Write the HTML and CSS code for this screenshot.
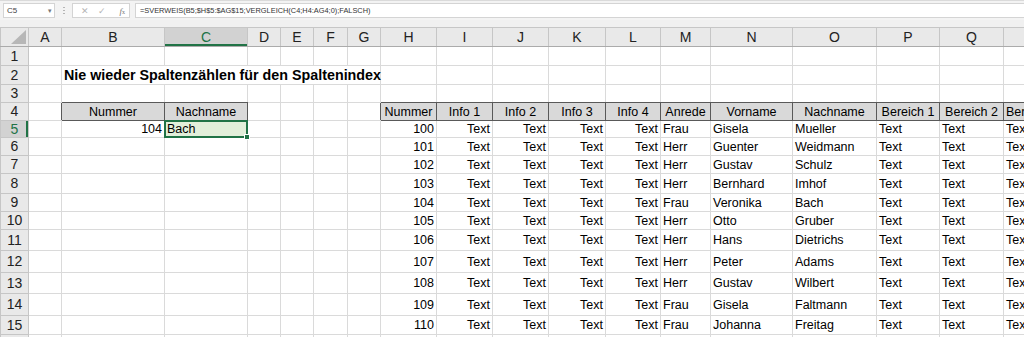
FILE: index.html
```html
<!DOCTYPE html>
<html lang="de">
<head>
    <meta charset="UTF-8">
    <title>Spaltenindex</title>
    <link rel="stylesheet" href="styles.css">
</head>
<body>
    <div class="bar">
        <div class="namebox"><span>C5</span><span class="drop">&#9662;</span></div>
        <div class="grip"></div>
        <div class="fxbox">
            <span class="ico">&#10005;</span>
            <span class="ico">&#10003;</span>
            <span class="fx"><i>f</i><small>x</small></span>
        </div>
        <div class="formula">=SVERWEIS(B5;$H$5:$AG$15;VERGLEICH(C4;H4:AG4;0);FALSCH)</div>
    </div>
    <div class="gap"></div>

    <div class="sheet">
        <table class="grid">
            <colgroup>
                <col class="w-hdr"><col class="w-a"><col class="w-b"><col class="w-c"><col class="w-d"><col class="w-d"><col class="w-f"><col class="w-d">
                <col class="w-h"><col class="w-h"><col class="w-h"><col class="w-k"><col class="w-l"><col class="w-m"><col class="w-n"><col class="w-o"><col class="w-p"><col class="w-q"><col class="w-r">
            </colgroup>
            <thead>
                <tr class="h18">
                    <th class="corner"><svg width="28" height="18" viewBox="0 0 28 18"><polygon points="10,16 25,16 25,2" fill="#b7b7b7"/></svg></th>
                    <th>A</th><th>B</th><th class="cur-col">C</th><th>D</th><th>E</th><th>F</th><th>G</th>
                    <th>H</th><th>I</th><th>J</th><th>K</th><th>L</th><th>M</th><th>N</th><th>O</th><th>P</th><th>Q</th><th>R</th>
                </tr>
            </thead>
            <tbody>
                <tr class="h19"><th>1</th><td></td><td></td><td></td><td></td><td></td><td></td><td></td><td></td><td></td><td></td><td></td><td></td><td></td><td></td><td></td><td></td><td></td><td></td></tr>
                <tr class="h19"><th>2</th><td></td><td class="title" colspan="6">Nie wieder Spaltenzählen für den Spaltenindex</td><td></td><td></td><td></td><td></td><td></td><td></td><td></td><td></td><td></td><td></td><td></td></tr>
                <tr class="h18"><th>3</th><td></td><td class="over"></td><td class="over"></td><td></td><td></td><td></td><td></td><td class="over"></td><td class="over"></td><td class="over"></td><td class="over"></td><td class="over"></td><td class="over"></td><td class="over"></td><td class="over"></td><td class="over"></td><td class="over"></td><td class="over"></td></tr>
                <tr class="h18"><th>4</th><td class="before"></td><td class="hd">Nummer</td><td class="hd">Nachname</td><td></td><td></td><td></td><td class="before"></td>
                    <td class="hd">Nummer</td><td class="hd">Info 1</td><td class="hd">Info 2</td><td class="hd">Info 3</td><td class="hd">Info 4</td><td class="hd">Anrede</td><td class="hd">Vorname</td><td class="hd">Nachname</td><td class="hd">Bereich 1</td><td class="hd">Bereich 2</td><td class="hd left">Bereich 3</td></tr>
                <tr class="h17"><th class="cur-row">5</th><td></td><td class="num">104</td><td class="sel">Bach</td><td></td><td></td><td></td><td></td>
                    <td class="num">100</td><td class="num">Text</td><td class="num">Text</td><td class="num">Text</td><td class="num">Text</td><td>Frau</td><td>Gisela</td><td>Mueller</td><td>Text</td><td>Text</td><td>Text</td></tr>
                <tr class="h18"><th>6</th><td></td><td></td><td></td><td></td><td></td><td></td><td></td>
                    <td class="num">101</td><td class="num">Text</td><td class="num">Text</td><td class="num">Text</td><td class="num">Text</td><td>Herr</td><td>Guenter</td><td>Weidmann</td><td>Text</td><td>Text</td><td>Text</td></tr>
                <tr class="h18"><th>7</th><td></td><td></td><td></td><td></td><td></td><td></td><td></td>
                    <td class="num">102</td><td class="num">Text</td><td class="num">Text</td><td class="num">Text</td><td class="num">Text</td><td>Herr</td><td>Gustav</td><td>Schulz</td><td>Text</td><td>Text</td><td>Text</td></tr>
                <tr class="h20"><th>8</th><td></td><td></td><td></td><td></td><td></td><td></td><td></td>
                    <td class="num">103</td><td class="num">Text</td><td class="num">Text</td><td class="num">Text</td><td class="num">Text</td><td>Herr</td><td>Bernhard</td><td>Imhof</td><td>Text</td><td>Text</td><td>Text</td></tr>
                <tr class="h18"><th>9</th><td></td><td></td><td></td><td></td><td></td><td></td><td></td>
                    <td class="num">104</td><td class="num">Text</td><td class="num">Text</td><td class="num">Text</td><td class="num">Text</td><td>Frau</td><td>Veronika</td><td>Bach</td><td>Text</td><td>Text</td><td>Text</td></tr>
                <tr class="h18"><th>10</th><td></td><td></td><td></td><td></td><td></td><td></td><td></td>
                    <td class="num">105</td><td class="num">Text</td><td class="num">Text</td><td class="num">Text</td><td class="num">Text</td><td>Herr</td><td>Otto</td><td>Gruber</td><td>Text</td><td>Text</td><td>Text</td></tr>
                <tr class="h21"><th>11</th><td></td><td></td><td></td><td></td><td></td><td></td><td></td>
                    <td class="num">106</td><td class="num">Text</td><td class="num">Text</td><td class="num">Text</td><td class="num">Text</td><td>Herr</td><td>Hans</td><td>Dietrichs</td><td>Text</td><td>Text</td><td>Text</td></tr>
                <tr class="h22"><th>12</th><td></td><td></td><td></td><td></td><td></td><td></td><td></td>
                    <td class="num">107</td><td class="num">Text</td><td class="num">Text</td><td class="num">Text</td><td class="num">Text</td><td>Herr</td><td>Peter</td><td>Adams</td><td>Text</td><td>Text</td><td>Text</td></tr>
                <tr class="h21"><th>13</th><td></td><td></td><td></td><td></td><td></td><td></td><td></td>
                    <td class="num">108</td><td class="num">Text</td><td class="num">Text</td><td class="num">Text</td><td class="num">Text</td><td>Herr</td><td>Gustav</td><td>Wilbert</td><td>Text</td><td>Text</td><td>Text</td></tr>
                <tr class="h22"><th>14</th><td></td><td></td><td></td><td></td><td></td><td></td><td></td>
                    <td class="num">109</td><td class="num">Text</td><td class="num">Text</td><td class="num">Text</td><td class="num">Text</td><td>Frau</td><td>Gisela</td><td>Faltmann</td><td>Text</td><td>Text</td><td>Text</td></tr>
                <tr class="h19"><th>15</th><td></td><td></td><td></td><td></td><td></td><td></td><td></td>
                    <td class="num">110</td><td class="num">Text</td><td class="num">Text</td><td class="num">Text</td><td class="num">Text</td><td>Frau</td><td>Johanna</td><td>Freitag</td><td>Text</td><td>Text</td><td>Text</td></tr>
                <tr class="h20"><th></th><td></td><td></td><td></td><td></td><td></td><td></td><td></td><td></td><td></td><td></td><td></td><td></td><td></td><td></td><td></td><td></td><td></td><td></td></tr>
            </tbody>
        </table>
    </div>
</body>
</html>
```

FILE: styles.css
```css
body {
    margin: 0;
    width: 1024px;
    height: 337px;
    overflow: hidden;
    background: #fff;
    font-family: 'Liberation Sans', Arial, sans-serif;
    color: #000;
}

/* formula bar */
.bar {
    display: flex;
    align-items: center;
    height: 20px;
    box-sizing: border-box;
    padding-left: 3px;
    background: #f3f3f3;
    border-top: 1px solid #dadada;
}

.namebox {
    width: 52px;
    height: 15px;
    box-sizing: border-box;
    display: flex;
    align-items: center;
    justify-content: space-between;
    padding: 0 2px 0 3px;
    background: #fff;
    border: 1px solid #d4d4d4;
    font-size: 8px;
    color: #444;
}

.drop {
    font-size: 7px;
    color: #777;
}

.grip {
    width: 2px;
    height: 9px;
    margin: 0 7px 0 8px;
    background: radial-gradient(circle, #b5b5b5 45%, transparent 50%) 0 0 / 2px 3px;
}

.fxbox {
    width: 58px;
    height: 15px;
    box-sizing: border-box;
    display: flex;
    align-items: center;
    padding: 0 4px 0 8px;
    gap: 9px;
    background: #fff;
    border: 1px solid #d4d4d4;
    color: #b5b5b5;
    font-size: 9px;
}

.fx {
    margin-left: auto;
    color: #777;
    font-family: 'Liberation Serif', serif;
    font-size: 9px;
}

.fx small {
    font-size: 6px;
}

.formula {
    flex: 1;
    height: 15px;
    box-sizing: border-box;
    margin-left: 5px;
    padding: 0 4px;
    background: #fff;
    border: 1px solid #d4d4d4;
    border-right: none;
    font-size: 7.4px;
    line-height: 14px;
    color: #333;
    white-space: nowrap;
}

.gap {
    height: 7px;
    background: #f0f0f0;
}

/* sheet grid */
.sheet {
    height: 310px;
    overflow: hidden;
}

.grid {
    border-collapse: collapse;
    table-layout: fixed;
    width: 1063px;
    font-size: 12.5px;
}

.w-hdr { width: 28px; }
.w-a { width: 33px; }
.w-b { width: 103px; }
.w-c { width: 83px; }
.w-d { width: 33px; }
.w-f { width: 34px; }
.w-h { width: 56px; }
.w-k { width: 57px; }
.w-l { width: 55px; }
.w-m { width: 50px; }
.w-n { width: 82px; }
.w-o { width: 84px; }
.w-p { width: 63px; }
.w-q { width: 64px; }
.w-r { width: 60px; }

.h17 { height: 17px; }
.h18 { height: 18px; }
.h19 { height: 19px; }
.h20 { height: 20px; }
.h21 { height: 21px; }
.h22 { height: 22px; }

.grid th {
    padding: 0;
    background: #e9e9e9;
    border: 1px solid #c6c6c6;
    font-weight: normal;
    font-size: 14px;
    line-height: 15px;
    color: #222;
    text-align: center;
    vertical-align: middle;
}

.grid thead th {
    border-bottom-color: #ababab;
}

.grid th.corner {
    line-height: 0;
    vertical-align: top;
}

.grid th.cur-col {
    background: #d2d2d2;
    color: #217346;
    box-shadow: inset 0 -2px 0 #217346;
}

.grid th.cur-row {
    background: #d2d2d2;
    color: #217346;
    box-shadow: inset -2px 0 0 #217346;
}

.grid td {
    padding: 0 2px;
    border: 1px solid #dadada;
    white-space: nowrap;
    overflow: hidden;
    vertical-align: middle;
    line-height: 14px;
}

.grid td.num {
    text-align: right;
}

.grid td.title {
    font-weight: bold;
    font-size: 14.3px;
    overflow: visible;
}

/* bordered header cells */
.grid td.hd {
    background: #d9d9d9;
    border: 1px solid #595959;
    text-align: center;
}

.grid td.hd.left {
    text-align: left;
}

.grid td.over {
    border-bottom-color: #595959;
}

.grid td.before {
    border-right-color: #595959;
}

/* active cell */
.grid td.sel {
    position: relative;
    background: #e2efda;
    overflow: visible;
}

.grid td.sel::after {
    content: "";
    position: absolute;
    left: -1px;
    top: -1px;
    right: -1px;
    bottom: -1px;
    border: 2px solid #217346;
}

.grid td.sel::before {
    content: "";
    position: absolute;
    right: -3px;
    bottom: -3px;
    width: 4px;
    height: 4px;
    background: #217346;
    border: 1px solid #fff;
    z-index: 1;
}
```
